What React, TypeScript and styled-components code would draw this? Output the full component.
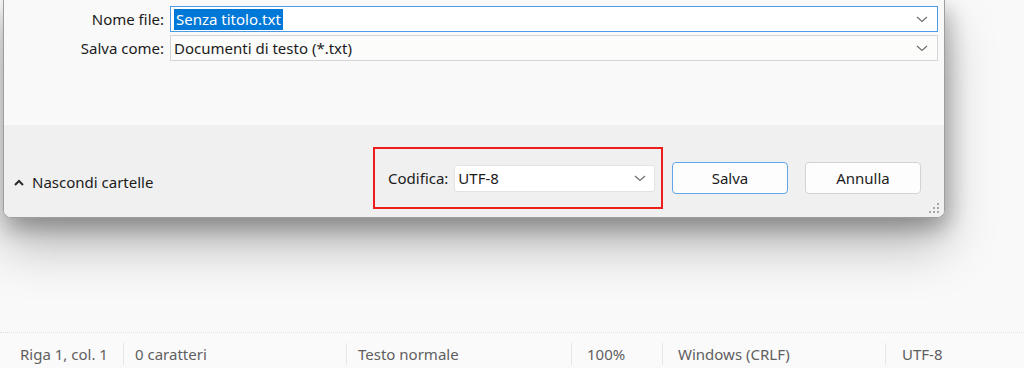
import React from 'react';
import styled, { createGlobalStyle } from 'styled-components';

const GlobalStyle = createGlobalStyle`
  html, body {
    margin: 0;
    padding: 0;
    background: #f9f9f9;
    font-family: 'Noto Sans', 'Open Sans', sans-serif;
    overflow: hidden;
  }
`;

const Page = styled.div`
  width: 1024px;
  height: 368px;
  display: flex;
  flex-direction: column;
  background: #f9f9f9;
`;

const Stage = styled.div`
  flex: 1;
  padding-left: 3px;
`;

const Dialog = styled.div`
  width: 942px;
  height: 218px;
  border: 1px solid #9e9e9e;
  border-top: none;
  border-radius: 0 0 8px 8px;
  box-shadow: 0 12px 22px rgba(0, 0, 0, 0.2), 0 28px 52px rgba(0, 0, 0, 0.26),
    8px 8px 20px rgba(0, 0, 0, 0.1);
  display: flex;
  flex-direction: column;
  overflow: hidden;
  box-sizing: border-box;
`;

const FormArea = styled.div`
  height: 125px;
  flex-shrink: 0;
  background: #f9f9f9;
  padding-top: 6px;
  padding-right: 6px;
  box-sizing: border-box;
  display: grid;
  grid-template-columns: 160px 1fr;
  grid-auto-rows: 26px;
  column-gap: 6px;
  row-gap: 3px;
  align-content: start;
`;

const Label = styled.label`
  font-size: 15px;
  color: #1b1b1b;
  text-align: right;
  line-height: 26px;
`;

const Field = styled.div<{ $focused?: boolean }>`
  display: flex;
  align-items: center;
  justify-content: space-between;
  border: 1px solid ${p => (p.$focused ? '#4b9be6' : '#d6d6d6')};
  background: ${p => (p.$focused ? '#ffffff' : '#fcfcfb')};
  padding: 0 9px 0 3px;
  box-sizing: border-box;
  font-size: 15px;
  color: #1b1b1b;
`;

const Selected = styled.span`
  background: #0078d7;
  color: #ffffff;
  padding: 0 2px;
  line-height: 21px;
`;

const Plain = styled.span`
  padding-left: 0;
`;

const Footer = styled.div`
  flex: 1;
  background: #f0f0f0;
  display: flex;
  align-items: center;
  position: relative;
  padding: 14px 23px 0 10px;
`;

const Toggle = styled.div`
  display: flex;
  align-items: center;
  gap: 8px;
  font-size: 15px;
  color: #1b1b1b;
  margin-top: 8px;
`;

const Spacer = styled.div`
  flex: 1;
`;

const Highlight = styled.div`
  width: 290px;
  height: 62px;
  box-sizing: border-box;
  border: 2px solid #ef1c1c;
  display: flex;
  align-items: center;
  padding: 0 6px 0 13px;
  gap: 6px;
  margin-right: 9px;
`;

const SmallLabel = styled.span`
  font-size: 15px;
  color: #1b1b1b;
`;

const Select = styled.div`
  flex: 1;
  height: 27px;
  border: 1px solid #e3e3e3;
  border-radius: 3px;
  background: #ffffff;
  display: flex;
  align-items: center;
  justify-content: space-between;
  padding: 0 8px 0 3px;
  font-size: 15px;
  color: #1b1b1b;
  box-sizing: border-box;
`;

const Button = styled.button<{ $primary?: boolean }>`
  width: 116px;
  height: 32px;
  box-sizing: border-box;
  border: 1px solid ${p => (p.$primary ? '#5ea6e8' : '#d3d3d3')};
  border-radius: 4px;
  background: #fdfdfd;
  font-family: inherit;
  font-size: 15px;
  color: #1b1b1b;
  & + & {
    margin-left: 17px;
  }
`;

const Grip = styled.svg`
  position: absolute;
  right: 4px;
  bottom: 3px;
`;

const StatusBar = styled.div`
  height: 36px;
  border-top: 1px dotted #e0e0e0;
  background: #fafafa;
  display: flex;
  align-items: center;
  padding-top: 6px;
  font-size: 15px;
  color: #5f5f5f;
  box-sizing: border-box;
`;

const Cell = styled.div<{ $width: number; $pad: number; $first?: boolean }>`
  width: ${p => p.$width}px;
  box-sizing: border-box;
  padding-left: ${p => p.$pad}px;
  border-left: ${p => (p.$first ? 'none' : '1px solid #e6e6e6')};
  line-height: 22px;
  flex-shrink: 0;
`;

const Chevron = () => (
  <svg width="12" height="7" viewBox="0 0 12 7" fill="none">
    <path d="M1 1l5 4.5L11 1" stroke="#6b6b6b" strokeWidth="1.1" />
  </svg>
);

const Caret = () => (
  <svg width="10" height="7" viewBox="0 0 10 7" fill="none">
    <path d="M1 6l4-4 4 4" stroke="#2b2b2b" strokeWidth="2" />
  </svg>
);

export default function App() {
  return (
    <>
      <GlobalStyle />
      <Page>
        <Stage>
          <Dialog>
            <FormArea>
              <Label>Nome file:</Label>
              <Field $focused>
                <Selected>Senza titolo.txt</Selected>
                <Chevron />
              </Field>
              <Label>Salva come:</Label>
              <Field>
                <Plain>Documenti di testo (*.txt)</Plain>
                <Chevron />
              </Field>
            </FormArea>
            <Footer>
              <Toggle>
                <Caret />
                Nascondi cartelle
              </Toggle>
              <Spacer />
              <Highlight>
                <SmallLabel>Codifica:</SmallLabel>
                <Select>
                  UTF-8
                  <Chevron />
                </Select>
              </Highlight>
              <Button $primary>Salva</Button>
              <Button>Annulla</Button>
              <Grip width="12" height="12" viewBox="0 0 12 12">
                <g fill="#a8a8a8">
                  <rect x="9" y="1" width="2" height="2" />
                  <rect x="5" y="5" width="2" height="2" />
                  <rect x="9" y="5" width="2" height="2" />
                  <rect x="1" y="9" width="2" height="2" />
                  <rect x="5" y="9" width="2" height="2" />
                  <rect x="9" y="9" width="2" height="2" />
                </g>
              </Grip>
            </Footer>
          </Dialog>
        </Stage>
        <StatusBar>
          <Cell $first $width={123} $pad={20}>Riga 1, col. 1</Cell>
          <Cell $width={223} $pad={11}>0 caratteri</Cell>
          <Cell $width={225} $pad={11}>Testo normale</Cell>
          <Cell $width={91} $pad={15}>100%</Cell>
          <Cell $width={223} $pad={15}>Windows (CRLF)</Cell>
          <Cell $width={139} $pad={16}>UTF-8</Cell>
        </StatusBar>
      </Page>
    </>
  );
}
